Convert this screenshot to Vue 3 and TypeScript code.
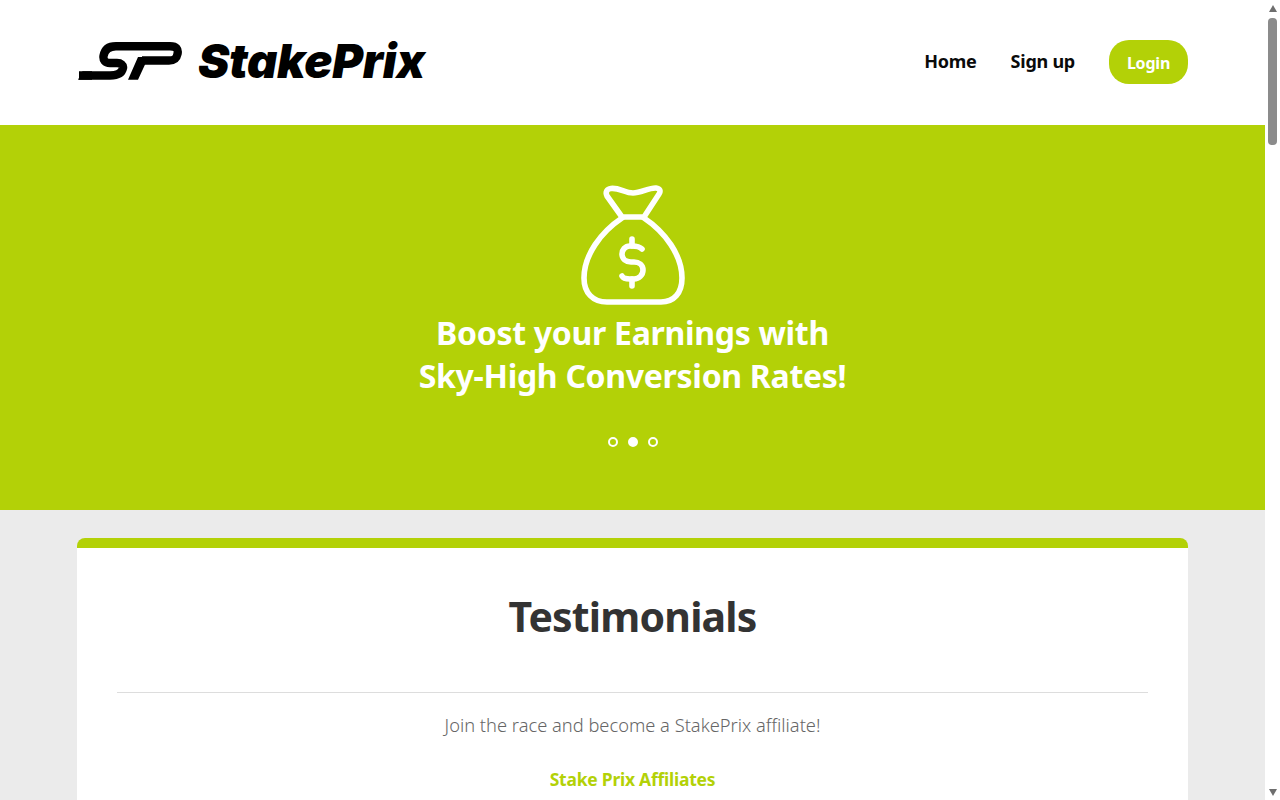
<script setup lang="ts">
const navLinks = ['Home', 'Sign up']
const slideDots = [false, true, false]
</script>

<template>
  <div class="shell">
    <div class="page">
      <header class="site-header">
        <div class="container header-row">
          <a class="logo" href="#">
            <svg class="logo-mark" viewBox="6 7 104 38" aria-hidden="true">
              <path d="M7 40.5 H38 C45 40.5 50 38 51 33 C51.5 30 49 28 45 28 H38 C33 28 31 25 31.5 21 C32.5 15 36 11.2 44 11.2 H98 C104.5 11.2 106.5 14 105.5 19 C104.5 24 102 25.5 97 25.5 H70" fill="none" stroke="#000" stroke-width="8.4" />
              <path d="M6 44.7 L10.5 36.3 H20 V44.7 Z M66 22 H76.5 L66 44.7 H56 Z" fill="#000" />
            </svg>
            <span class="logo-word">StakePrix</span>
          </a>
          <nav class="nav">
            <a v-for="link in navLinks" :key="link" class="nav-link" href="#">{{ link }}</a>
            <a class="login" href="#">Login</a>
          </nav>
        </div>
      </header>

      <section class="hero">
        <svg class="bag" viewBox="17 12 110 126" aria-hidden="true" fill="none" stroke="#fff" stroke-width="5.6" stroke-linecap="round" stroke-linejoin="round">
          <path d="M61 47 L46 26 C44 22 46 19 50 18.5 C58 17.5 64 23 72 23 C80 23 88 17.5 95 18 C99 18.5 100 21 98 24 L83 47 Z" />
          <path d="M61 48 C40 62 23 85 23 108 C23 123 32 132 46 132 H100 C113 132 121 123 121 108 C121 85 104 62 83 48" />
          <path d="M81 79 C79 77 76 76 71 76 H69 C64 76 61 80 61 84 C61 89 65 92 70 92 H73 C78 92 82 95 82 100 C82 105 78 109 73 109 H69 C65 109 62 108 61 106" />
          <path d="M71 69 V76 M71 109 V116" />
        </svg>
        <h1 class="hero-title">Boost your Earnings with<br />Sky-High Conversion Rates!</h1>
        <div class="dots">
          <span v-for="(active, i) in slideDots" :key="i" class="dot" :class="{ active }"></span>
        </div>
      </section>

      <main class="container content">
        <section class="card">
          <h2 class="card-title">Testimonials</h2>
          <hr class="divider" />
          <p class="intro">Join the race and become a StakePrix affiliate!</p>
          <p class="author">Stake Prix Affiliates</p>
        </section>
      </main>
    </div>

    <!-- page scrollbar -->
    <div class="scrollbar" aria-hidden="true">
      <span class="arrow up"></span>
      <span class="thumb"></span>
      <span class="arrow down"></span>
    </div>
  </div>
</template>

<style scoped>
.shell {
  display: flex;
  height: 100vh;
  overflow: hidden;
}

.page {
  flex: 1;
  min-width: 0;
  overflow: hidden;
  background: #ebebeb;
  font-family: "Noto Sans", "Open Sans", sans-serif;
}

.container {
  width: 1111px;
  margin: 0 auto;
}

.site-header {
  height: 125px;
  background: #fff;
}

.header-row {
  display: flex;
  justify-content: space-between;
  align-items: center;
  height: 123px;
}

.logo {
  display: flex;
  align-items: center;
  gap: 16px;
  margin-left: 1px;
  padding-bottom: 2px;
  color: #000;
  text-decoration: none;
}

.logo-mark {
  width: 104px;
  height: 38px;
}

.logo-word {
  font-family: Inter, sans-serif;
  font-size: 47px;
  font-weight: 900;
  font-style: italic;
  letter-spacing: -0.3px;
  line-height: 1;
}

.nav {
  display: flex;
  align-items: center;
}

.nav-link {
  margin-right: 34px;
  margin-bottom: 2px;
  font-size: 18px;
  font-weight: 700;
  letter-spacing: -0.25px;
  color: #0a0a0a;
  text-decoration: none;
}

.login {
  display: flex;
  align-items: center;
  justify-content: center;
  width: 79px;
  height: 44px;
  padding-top: 2px;
  box-sizing: border-box;
  border-radius: 20px;
  background: #b3d107;
  color: #fff;
  font-size: 16px;
  font-weight: 700;
  letter-spacing: -0.2px;
  text-decoration: none;
}

.hero {
  display: flex;
  flex-direction: column;
  align-items: center;
  height: 385px;
  padding-top: 57px;
  box-sizing: border-box;
  background: #b3d107;
}

.bag {
  width: 110px;
  height: 126px;
}

.hero-title {
  margin: 3px 0 0;
  font-size: 32px;
  font-weight: 700;
  letter-spacing: -0.3px;
  line-height: 43px;
  color: #fff;
  text-align: center;
}

.dots {
  display: flex;
  gap: 10px;
  margin-top: 40px;
}

.dot {
  width: 10px;
  height: 10px;
  box-sizing: border-box;
  border: 2px solid #fff;
  border-radius: 50%;
}

.dot.active {
  background: #fff;
}

.content {
  padding-top: 28px;
}

.card {
  padding: 0 40px 40px;
  background: #fff;
  border-top: 10px solid #b3d107;
  border-radius: 8px;
  text-align: center;
}

.card-title {
  margin: 0;
  padding-top: 38px;
  font-size: 41px;
  font-weight: 700;
  letter-spacing: -0.8px;
  line-height: 60px;
  color: #333;
}

.divider {
  margin: 46px 0 0;
  border: 0;
  border-top: 1px solid #ddd;
}

.intro {
  margin: 19px 0 0;
  font-size: 18.3px;
  font-weight: 300;
  line-height: 26px;
  color: #666;
}

.author {
  margin: 28px 0 0;
  font-size: 17.5px;
  font-weight: 700;
  letter-spacing: -0.25px;
  line-height: 26px;
  color: #b3d107;
}

.scrollbar {
  display: flex;
  flex: 0 0 15px;
  flex-direction: column;
  align-items: center;
  background: #fff;
}

.arrow {
  width: 0;
  height: 0;
  border-left: 4px solid transparent;
  border-right: 4px solid transparent;
}

.arrow.up {
  margin-top: 5px;
  border-bottom: 7px solid #6e6e6e;
}

.arrow.down {
  margin-top: auto;
  margin-bottom: 4px;
  border-top: 7px solid #6e6e6e;
}

.thumb {
  width: 9px;
  height: 127px;
  margin-top: 6px;
  border-radius: 4px;
  background: #8b8b8b;
}
</style>

<style>
html,
body {
  margin: 0;
  background: #ebebeb;
}
</style>
